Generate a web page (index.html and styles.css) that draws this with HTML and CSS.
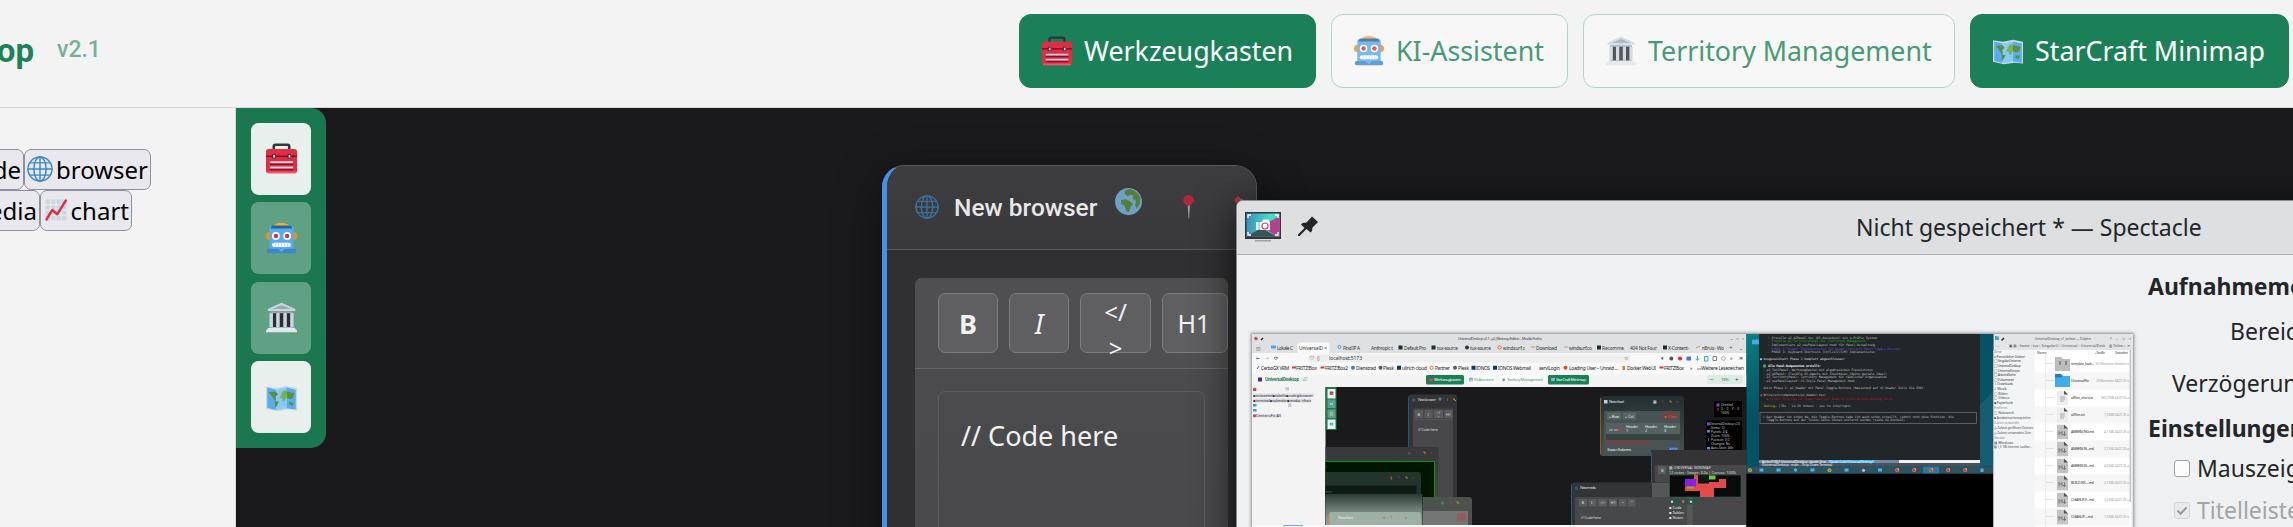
FILE: index.html
```html
<!DOCTYPE html>
<html lang="de">
<head>
<meta charset="utf-8">
<title>UniversalDesktop</title>
<link rel="stylesheet" href="styles.css">
</head>
<body>
<svg class="defs" width="0" height="0" aria-hidden="true">
  <defs>
    <linearGradient id="shot" x1="0" y1="0" x2="1" y2="0"><stop offset="0" stop-color="#3d8fc0"/><stop offset=".7" stop-color="#45dcc0"/></linearGradient>
    <linearGradient id="teal" x1="0" y1="0" x2="1" y2="1"><stop offset="0" stop-color="#0b8080"/><stop offset=".3" stop-color="#045064"/><stop offset="1" stop-color="#0a5468"/></linearGradient>
    <linearGradient id="pane" x1="0" y1="0" x2="0" y2="1"><stop offset="0" stop-color="#38383a"/><stop offset="1" stop-color="#4c4c4e"/></linearGradient>
    <linearGradient id="chartbg" x1="0" y1="0" x2="0" y2="1"><stop offset="0" stop-color="#24302f"/><stop offset="1" stop-color="#465352"/></linearGradient>
    <linearGradient id="fade" x1="0" y1="0" x2="0" y2="1"><stop offset="0" stop-color="#2b3a33"/><stop offset=".5" stop-color="#6d7f76"/><stop offset="1" stop-color="#93a39b"/></linearGradient>
    <symbol id="toolbox" viewBox="0 0 36 36">
      <path d="M9 8V4q0-2 2-2h14q2 0 2 2v4" fill="none" stroke="#31373d" stroke-width="3"/>
      <rect y="7" width="36" height="28" rx="3" fill="#dd2e44"/><rect y="14.500" width="36" height="1.800" fill="#a0041e"/>
      <rect x="1" y="33" width="34" height="2" rx="1" fill="#ea596e"/>
      <path d="M7 13h4v5H7zM25 13h4v5h-4z" fill="#31373d"/><path d="M8.300 14h2v3h-2zM26.300 14h2v3h-2z" fill="#ccd6dd"/>
      <path d="M4.500 23.500h27v2h-27zM4.500 29.500h27v2h-27z" fill="#a0041e"/><path d="M4.500 21.300h27v2.200h-27zM4.500 27.300h27v2.200h-27z" fill="#ccd6dd"/>
    </symbol>
    <symbol id="robot" viewBox="0 0 36 36">
      <ellipse cx="18" cy="4" rx="9" ry="4" fill="#ffac33"/><circle cx="4.500" cy="15" r="4.500" fill="#f4900c"/><circle cx="31.500" cy="15" r="4.500" fill="#f4900c"/>
      <rect x="4" y="4" width="28" height="27" rx="2" fill="#55acee"/><path d="M7 3h22l1.500 3.500h-25z" fill="#226699"/>
      <rect x="1" y="30" width="34" height="5" rx="2" fill="#3b88c3"/><path d="M14 30h8l-4 4z" fill="#55acee"/>
      <circle cx="11.500" cy="15" r="4.500" fill="#fff"/><circle cx="24.500" cy="15" r="4.500" fill="#fff"/><circle cx="11.500" cy="15" r="2.600" fill="#dd2e44"/><circle cx="24.500" cy="15" r="2.600" fill="#dd2e44"/>
      <rect x="7" y="23" width="22" height="5" rx="2.500" fill="#fff"/><path d="M11 23v5M14.500 23v5M18 23v5M21.500 23v5M25 23v5" stroke="#ccd6dd" stroke-width="1"/>
    </symbol>
    <symbol id="temple" viewBox="0 0 36 36">
      <path d="M5 11h26v22H5z" fill="#9aaab4"/><path d="M8 13h4v16H8zM16 13h4v16h-4zM24 13h4v16h-4z" fill="#292f33"/>
      <path d="M4 13h4v16H4zM12 13h3.500v16H12zM20.500 13H24v16h-3.500zM28.500 13H32v16h-3.500z" fill="#ccd6dd"/>
      <path d="M18 1L34 8v2.500H2V8z" fill="#ccd6dd"/><path d="M18 3.500L29 8H7z" fill="#9aaab4"/><path d="M3 30h30l3 3v2H0v-2z" fill="#e1e8ed"/>
    </symbol>
    <symbol id="map" viewBox="0 0 36 36">
      <path d="M0 5l12 2L24 4.500 36 7v26l-10-1-13 2L0 31z" fill="#ccd6dd"/>
      <path d="M1.500 6.500L11.500 9v23.500L1.500 30z" fill="#55acee"/><path d="M11.500 9L24 6.500V30.500l-12.500 2z" fill="#88c9f9"/><path d="M24 6.500L34.500 9v23L24 30.500z" fill="#55acee"/>
      <path d="M3 12l8-1 3 3-3 3 1 5-3-2-3-5zM10 22l5 1-2 4-2 3z" fill="#5c913b"/><path d="M16 19l3-8 5-2v8l-3 6-2-1v-3z" fill="#77b255"/><path d="M24 11l9 2-2 6-4 1-3-2zM27 23l5 1-1 4-4-2z" fill="#5c913b"/>
    </symbol>
    <symbol id="globe" viewBox="0 0 36 36">
      <g fill="none" stroke="currentColor" stroke-width="2"><circle cx="18" cy="18" r="16.700"/><ellipse cx="18" cy="18" rx="8.500" ry="16.700"/><path d="M18 1v34M1 18h34M4 9.500h28M4 26.500h28"/></g>
    </symbol>
    <symbol id="earth" viewBox="0 0 36 36">
      <circle cx="18" cy="18" r="18" fill="#6e9fc4"/>
      <path d="M13 4l7-3 8 4 6 7-1 9-4 7-2-5 1-6-5-3 2-4-5-1-3 2-4-3zM8 16l6-1 5 2 5 4-3 4-2 7-4-1-2-7-5-3z" fill="#547f38"/>
    </symbol>
    <symbol id="pin" viewBox="0 0 16 36"><path d="M6.500 14h4L9 34l-.600 2-.600-2z" fill="#8c98a0"/><circle cx="8" cy="8" r="8" fill="#b0293a"/></symbol>
    <symbol id="chart" viewBox="0 0 36 36">
      <path d="M1 1h34v34H1z" fill="#ccd6dd"/><path d="M9.500 1v34M18 1v34M26.500 1v34M1 9.500h34M1 18h34M1 26.500h34" stroke="#f0f2f4" stroke-width="1.500"/>
      <path d="M2.500 33.500L12 18l8 7L34 2.500" fill="none" stroke="#dd2e44" stroke-width="4" stroke-linecap="round" stroke-linejoin="round"/>
    </symbol>
    <symbol id="folder" viewBox="0 0 15 13"><path d="M0 0h6l2 2h7v11H0z" fill="#2980b0"/><path d="M0 3.500h6L8 2h7v11H0z" fill="#3daee9"/></symbol>
    <symbol id="md" viewBox="0 0 11 15"><path d="M0 0h7l4 4v11H0z" fill="#c3c3c3"/><path d="M7 0l4 4H7z" fill="#555"/><path d="M2 11V7l1.500 2L5 7v4M7.500 7v4M6 9.500L7.500 11 9 9.500" fill="none" stroke="#777" stroke-width="1"/></symbol>
    <symbol id="doc" viewBox="0 0 11 15"><path d="M0 0h7l4 4v11H0z" fill="#ededed"/><path d="M7 0l4 4H7z" fill="#555"/><path d="M3 6.500h5M3 8.500h5M3 10.500h4" stroke="#999" stroke-width=".8"/></symbol>
    <symbol id="fox" viewBox="0 0 4 4"><circle cx="2" cy="2" r="1.900" fill="#f0672a"/><circle cx="2" cy="2.100" r="1" fill="#7a3cc8"/><path d="M2 0l1.800 1.200L3 2z" fill="#ffc13c"/></symbol>
  </defs>
</svg>

<header class="topbar">
  <div class="brand"><span>UniversalDesktop</span></div>
  <span class="version">v2.1</span>
  <nav class="tabs">
    <button class="tab tab-on" style="width:297px"><svg><use href="#toolbox"/></svg><span>Werkzeugkasten</span></button>
    <button class="tab" style="width:237px"><svg><use href="#robot"/></svg><span>KI-Assistent</span></button>
    <button class="tab" style="width:372px"><svg><use href="#temple"/></svg><span>Territory Management</span></button>
    <button class="tab tab-on" style="width:319px"><svg><use href="#map"/></svg><span>StarCraft Minimap</span></button>
  </nav>
</header>

<main class="workspace">
  <aside class="tools">
    <div class="tool-row row-one"><button>code</button><button class="with-icon wide"><svg class="blue"><use href="#globe"/></svg>browser</button></div>
    <div class="tool-row row-two"><button>media</button><button class="with-icon narrow"><svg class="small"><use href="#chart"/></svg>chart</button></div>
  </aside>
  <section class="canvas">
    <div class="dock">
      <button class="on"><svg><use href="#toolbox"/></svg></button>
      <button><svg><use href="#robot"/></svg></button>
      <button><svg><use href="#temple"/></svg></button>
      <button class="on"><svg><use href="#map"/></svg></button>
    </div>

    <article class="editor">
      <header class="editor-head">
        <svg class="e-globe"><use href="#globe"/></svg><h2>New browser</h2>
        <svg class="e-earth"><use href="#earth"/></svg><svg class="e-pin"><use href="#pin"/></svg>
        <svg class="e-pencil" viewBox="0 0 24 24"><path d="M1 5l4-4 4 3-5 5z" fill="#b0394a"/><path d="M4 9l5-5 3 3-5 5z" fill="#8c98a0"/><path d="M7 12l5-5 10 10-1 5-5-1z" fill="#c89030"/></svg>
      </header>
      <div class="editor-body">
        <div class="editor-panel">
          <div class="format-bar">
            <button class="bold">B</button><button class="italic">I</button><button class="code">&lt;/<br>&gt;</button><button class="h1">H1</button>
          </div>
          <div class="code-area"><p>// Code here</p></div>
        </div>
      </div>
    </article>

    <article class="spectacle">
      <header class="spec-head">
        <svg class="spec-logo" viewBox="0 0 36 30"><path d="M0 0h36v27H0z" fill="#33373b"/><path d="M1.500 1.500h33v23h-33z" fill="url(#shot)"/><path d="M34.500 4v20.500H31L17 14z" fill="#b5418c"/><path d="M2 24l15-8 14 8.500H2z" fill="#3a5358"/><path d="M3 6V3h3M30 3h3v3M33 20v3h-3M6 23H3v-3" fill="none" stroke="#fff" stroke-width="1.300"/><path d="M11 10h2.500v8H11zM14.500 10H17l1-2.500h5.500l1 2.500h.5v8H14.500z" fill="#fff"/><circle cx="20" cy="14" r="3" fill="none" stroke="#c63d80" stroke-width="1.200"/><path d="M10 28h16v1.500H10z" fill="#9da3aa"/></svg>
        <svg class="spec-pin" viewBox="0 0 20 20"><path d="M14 .500L20 6l-5.500 5.500-.500 3.500-1.500 1.500L8.500 13 1.500 20H0v-1.500L6.500 12 3 8.500 4.500 7l4-.500z" fill="#232629"/></svg>
        <h1>Nicht gespeichert * — Spectacle</h1>
      </header>
      <div class="spec-body">
        <svg class="preview" viewBox="1252 334 881 193">
          <path d="M1252 334h881v193h-881z" fill="#000"/>
          <!-- browser window -->
          <path d="M1252 334h494.500v20H1252z" fill="#dfe0e2"/><path d="M1252 353h494.500v34H1252z" fill="#f8f8f9"/><path d="M1252 374.500h494.500v12.500H1252z" fill="#f3f3f3"/>
          <rect x="1297.500" y="342.500" width="32" height="11" rx="1.500" fill="#f8f8f9"/><rect x="1308" y="354.500" width="322" height="8" rx="2" fill="#eeeeef"/>
          <use href="#fox" x="1254" y="336.500" width="4" height="4"/><path d="M1260.500 339.500l2-2 1 1-2 2z" fill="#222"/>
          <g class="t" font-size="3.700" fill="#444"><text x="1458" y="339.800" textLength="84">UniversalDesktop v2.1 - µ2_Minimap Edition – Mozilla Firefox</text><text x="1730" y="340" textLength="14">⌄ ◇ ×</text></g>
          <g class="t" font-size="4.800" fill="#333">
            <text x="1256" y="349.500">◫</text><text x="1277" y="349.500" textLength="16">Lokale C</text><text x="1299" y="349.500" textLength="28">UniversalD ×</text><text x="1343" y="349.500" textLength="17">Find IP A</text><text x="1371" y="349.500" textLength="22">Anthropic t</text><text x="1404" y="349.500" textLength="22">Default Pro</text><text x="1437" y="349.500" textLength="21">tux-source</text><text x="1470" y="349.500" textLength="21">tux-source</text><text x="1503" y="349.500" textLength="22">windsurf.c</text><text x="1536" y="349.500" textLength="21">Download</text><text x="1569" y="349.500" textLength="23">windsurf.co</text><text x="1602" y="349.500" textLength="22">Recomme</text><text x="1630" y="349.500" textLength="27">404 Not Four</text><text x="1668" y="349.500" textLength="21">X-Content-</text><text x="1702" y="349.500" textLength="22">n8n.io - Wo</text><text x="1729.500" y="349.500">+</text><text x="1739" y="349.500">⌄</text>
          </g>
          <path d="M1271 345.500h5v3h-5z" fill="#3daee9"/><path d="M1398.500 345.500h4v4h-4zM1431.500 345.500h4v4h-4zM1597 345.500h4v4h-4zM1663 345.500h4v4h-4z" fill="#1c3028"/><circle cx="1339.500" cy="347" r="1.600" fill="none" stroke="#2a8ad0" stroke-width=".8"/><circle cx="1467" cy="347.500" r="2" fill="#333"/><circle cx="1499.500" cy="347.500" r="1.700" fill="none" stroke="#e86a30"/><path d="M1530.500 347h4.500M1564 347h4.500M1696 348l4-2" stroke="#d5a030"/>
          <g class="t" font-size="5" fill="#333"><text x="1256" y="360">←</text><text x="1265" y="360" fill="#aaa">→</text><text x="1274" y="360">⟳</text><text x="1310" y="360">⛉</text><text x="1317" y="360">▯</text><text x="1329" y="360" textLength="33">localhost:5173</text><text x="1624" y="360">☆</text><text x="1661" y="360">▾</text><text x="1730" y="360">»</text><text x="1739" y="360">≡</text></g>
          <circle cx="1671.300" cy="358.500" r="2" fill="#555"/><circle cx="1680" cy="358.500" r="2.100" fill="#e22850"/><path d="M1686.500 356.500h4.500v4h-4.500z" fill="#4b74e0"/><path d="M1697.500 356v4M1696 358.500l1.500 2 1.500-2" stroke="#3daee9" fill="none"/><path d="M1704.500 356.500h3.500v4.500h-3.500z" fill="none" stroke="#30b0a0"/><path d="M1713 356.500h3.500v4h-3.500z" fill="none" stroke="#555" stroke-width=".7"/><circle cx="1723.500" cy="358.500" r="1.900" fill="none" stroke="#999" stroke-width=".7"/>
          <g class="t" font-size="4.800" fill="#222">
            <text x="1261" y="369.500" textLength="28">CerboGX VRM</text><text x="1296" y="369.500" textLength="21">FRITZ!Box</text><text x="1325" y="369.500" textLength="23">FRITZ!Box2</text><text x="1356" y="369.500" textLength="20">Dienstrad</text><text x="1383" y="369.500" textLength="11">Plesk</text><text x="1402" y="369.500" textLength="25">ullrich cloud</text><text x="1435" y="369.500" textLength="15">Partner</text><text x="1458" y="369.500" textLength="11">Plesk</text><text x="1476" y="369.500" textLength="14">IONOS</text><text x="1498" y="369.500" textLength="33">IONOS Webmail</text><text x="1539" y="369.500" textLength="21">serviLogin</text><text x="1569" y="369.500" textLength="49">Loading User – Unraid ...</text><text x="1627" y="369.500" textLength="29">Docker WebUI</text><text x="1664" y="369.500" textLength="20">FRITZ!Box</text><text x="1690" y="369.500">»</text><text x="1697" y="369.500" textLength="47">▭Weitere Lesezeichen</text>
          </g>
          <path d="M1292 366.500h4v2h-4zM1320.500 366.500h4v2h-4zM1659.500 366.500h4v2h-4z" fill="#e03818"/><circle cx="1353" cy="367.800" r="2" fill="#2d86d8"/><circle cx="1380.500" cy="367.800" r="2" fill="#4a6070"/><path d="M1397 365.800h4v4h-4zM1471.500 365.800h4v4h-4zM1493 365.800h4v4h-4z" fill="#12366e"/><circle cx="1431.500" cy="367.800" r="1.700" fill="none" stroke="#e87830"/><circle cx="1455" cy="367.800" r="2" fill="#4a6070"/><circle cx="1565.500" cy="367.800" r="2" fill="#e05018"/><path d="M1622.500 366h2.500v4h-2.500z" fill="#e08030"/><path d="M1257 369l2-3" stroke="#2a7ad0"/>
          <path d="M1258 377.500h4v4h-4z" fill="#4a2a80"/>
          <g class="t" font-size="4.500" fill="#1a7f56"><text x="1265" y="381" textLength="34" font-weight="bold">UniversalDesktop</text><text x="1302" y="380.800" textLength="6" opacity=".5">v2.1</text></g>
          <rect x="1426" y="375" width="38" height="9.500" rx="1.500" fill="#1a7f56"/><rect x="1467" y="375" width="29.500" height="9.500" rx="1.500" fill="#fafafa"/><rect x="1499" y="375" width="47" height="9.500" rx="1.500" fill="#fafafa"/><rect x="1548" y="375" width="41" height="9.500" rx="1.500" fill="#1a7f56"/><rect x="1707" y="375" width="36" height="9" rx="1.500" fill="#dcebe3"/>
          <use href="#toolbox" x="1429" y="377.500" width="4" height="4"/><use href="#robot" x="1469" y="377.500" width="4" height="4"/><use href="#temple" x="1502" y="378" width="3.500" height="3.500"/><use href="#map" x="1551" y="377.500" width="4" height="4"/>
          <g class="t" font-size="4.200"><text x="1434" y="381.200" textLength="27" fill="#fff">Werkzeugkasten</text><text x="1474" y="381.200" textLength="20" fill="#50a080">KI-Assistent</text><text x="1507" y="381.200" textLength="36" fill="#50a080">Territory Management</text><text x="1556" y="381.200" textLength="30" fill="#fff">StarCraft Minimap</text><text x="1710" y="381.500" font-size="6" fill="#333">−</text><text x="1721" y="381.200" textLength="8" fill="#3a9570">100%</text><text x="1735" y="381.500" font-size="6" fill="#333">+</text></g>
          <path d="M1252 387h494.500v138H1252z" fill="#1a1a1c"/><path d="M1252 387h73.500v138H1252z" fill="#f3f3f3"/>
          <path d="M1253 393.500h61v3.500h-61zM1253 398.500h58v4h-58zM1253 414h28v3.500h-28z" fill="#dedee4"/>
          <use href="#toolbox" x="1253" y="387.500" width="3.500" height="3.500"/><path d="M1285.500 387h3.500v3.500h-3.500zM1288 403.500h3.500v3.500h-3.500z" fill="#c3cbd3"/><path d="M1253 404h3.500v2.500h-3.500zM1253 409h3.500v2.500h-3.500z" fill="#30a0a8"/><circle cx="1254.500" cy="415.700" r="1.500" fill="#dd2e44"/>
          <g class="t" font-size="3.500" fill="#222"><text x="1253" y="396.500" textLength="60" lengthAdjust="spacingAndGlyphs">▪notizzettel▪tabelle▪code◍browser</text><text x="1253" y="401.800" textLength="58" lengthAdjust="spacingAndGlyphs">▪terminal▪calendar▪media⟋chart</text><text x="1256" y="417" textLength="25">Center▫Fit All</text></g>
          <path d="M1325.500 387h11v43h-11z" fill="#1a7850"/><path d="M1327.500 389h8v9.500h-8zM1327.500 419.500h8v9.500h-8z" fill="#eaf2ee"/><path d="M1327.500 399.500h8v8.500h-8zM1327.500 409.500h8v8.500h-8z" fill="#60a085"/>
          <use href="#toolbox" x="1329.500" y="391" width="4" height="4"/><use href="#robot" x="1329.500" y="401.500" width="4" height="4"/><use href="#temple" x="1329.500" y="411.500" width="4" height="4"/><use href="#map" x="1329.500" y="422" width="4" height="4"/>
          <!-- narrow editor -->
          <rect x="1408" y="394.500" width="49" height="130" rx="3" fill="#343436"/><path d="M1408.500 397v55" stroke="#25597c" stroke-width="1"/><rect x="1413" y="408.500" width="40" height="116" fill="#48484a"/><path d="M1413 419.500h40" stroke="#666" stroke-width=".4"/>
          <path d="M1415 410h8v8h-8zM1424.500 410h8v8h-8zM1434 410h9v8h-9zM1444.500 410h8v8h-8z" fill="#5a5a5c"/>
          <g class="t" font-size="3.800" fill="#ddd"><text x="1412" y="400.800" fill="#3b88c3">◍</text><text x="1418" y="400.800" textLength="18">New browser</text><text x="1417.500" y="415.500">B</text><text x="1427.500" y="415.500">I</text><text x="1436.500" y="413.500">&lt;/</text><text x="1437.500" y="417.500">&gt;</text><text x="1446" y="415.500">H1</text><text x="1418" y="430.500" textLength="20">// Code here</text></g>
          <circle cx="1440" cy="399" r="1.700" fill="#4f8080"/><path d="M1447.500 398v3" stroke="#b0293a"/><path d="M1453 398.500l3 2.500" stroke="#e0a030"/>
          <!-- stacked windows -->
          <path d="M1325.500 447h110q3 0 3 3v75h-113z" fill="url(#pane)"/><path d="M1325.500 461.500h109V525h-109z" fill="#001600"/><path d="M1325.500 461.500h109V507" fill="none" stroke="#109010" stroke-width="1"/>
          <path d="M1325.500 472h92.500q3 0 3 3v50h-95.500z" fill="#22342b"/><rect x="1325.500" y="485.500" width="91" height="12" fill="#0e1a14"/><path d="M1325.500 494h97v31h-97z" fill="url(#fade)"/>
          <path d="M1423 497h46q3 0 3 3v25h-49z" fill="#4e524f"/><path d="M1423 511h45v14h-45z" fill="#737674"/><rect x="1457" y="513" width="9" height="8" rx="1" fill="#955c60"/>
          <rect x="1329" y="512" width="92" height="14" rx="2" fill="#9cb0a6"/><path d="M1329 514v11" stroke="#e08040"/>
          <g class="t" font-size="3.800"><text x="1338" y="518.800" textLength="15" fill="#eee">New chart</text><g fill="#d04040"><text x="1383" y="518.800">▫</text><text x="1391" y="518.800">!</text><text x="1398" y="518.800" fill="#e0a030">✎</text><text x="1405" y="518.800">×</text><text x="1390" y="478.500">▮</text><text x="1398" y="478.500">!</text><text x="1405" y="478.500" fill="#e0a030">✎</text><text x="1412" y="478.500">×</text><text x="1408" y="453.500" fill="#e0a030">+</text><text x="1416" y="453.500">!</text><text x="1423" y="453.500" fill="#e0a030">✎</text><text x="1430" y="453.500">×</text><text x="1441" y="503.500" fill="#60a090">◍</text><text x="1450" y="503.500">!</text><text x="1456" y="503.500" fill="#e0a030">✎</text><text x="1464" y="503.500">×</text></g><text x="1326" y="467.500" fill="#20c020">›</text><text x="1326" y="492.500" fill="#20a040">ers</text></g>
          <!-- chart window -->
          <rect x="1600" y="396" width="84" height="60" rx="3" fill="url(#chartbg)"/><path d="M1600.500 398v56" stroke="#9a5028" stroke-width="1"/><rect x="1604" y="411" width="76" height="42" fill="#485453"/>
          <rect x="1607" y="412.500" width="14" height="7" fill="#596563"/><rect x="1623" y="412.500" width="13" height="7" fill="#596563"/><rect x="1662" y="412.500" width="16" height="6.500" fill="#704347"/><path d="M1606 423h74v11h-74z" fill="#536160"/><path d="M1606 434h74v6h-74z" fill="#37433f"/><path d="M1606 440h45v5h-45z" fill="#63484a"/><rect x="1669" y="447" width="9" height="4" fill="#2b66a8"/>
          <g class="t" font-size="3.800" fill="#eee"><text x="1609" y="402.800" textLength="15">New chart</text><text x="1609" y="417.500" textLength="10">+ Row</text><text x="1625" y="417.500">+ Col</text><text x="1664" y="417.500" textLength="13" fill="#e05050">▪ Clear</text><text x="1626" y="428" textLength="12">Header</text><text x="1626" y="432">1</text><text x="1645" y="428" textLength="12">Header</text><text x="1645" y="432">2</text><text x="1664" y="428" textLength="12">Header</text><text x="1664" y="432">3</text><text x="1607" y="450.500" textLength="24">3 rows × 3 columns</text><text x="1669.500" y="450.500" textLength="8" fill="#9cf">EDIT</text><text x="1653" y="402.800">▦</text><text x="1662" y="402.800" fill="#e04040">!</text><text x="1669" y="402.800" fill="#e0a030">✎</text><text x="1676" y="402.800" fill="#e04040">×</text></g><path d="M1604 400h3.500v3.500h-3.500z" fill="#b8d0e0"/><path d="M1609 430h4M1614 430h4" stroke="#ddd" stroke-width=".7"/><path d="M1618 428.500h3v3h-3z" fill="#a04448"/>
          <path d="M1714 401h28v16h-28zM1706 420.500h36v30h-36z" fill="#000"/>
          <g class="t" font-size="3.200" fill="#ccc"><text x="1721" y="406">Untitled</text><text x="1721" y="410" textLength="18">X: 0, Y: 0</text><text x="1721" y="414.200">100%</text><text x="1710" y="425" textLength="30" lengthAdjust="spacingAndGlyphs">UniversalDesktop v2.0</text><text x="1711" y="429">Items: 12</text><text x="1711" y="433">Panels: 2/4</text><text x="1711" y="437">Zoom: 100%</text><text x="1711" y="441">Position: 0,0</text><text x="1711" y="445">Changes: No</text><text x="1711" y="449">Auto-Save: Idle</text></g>
          <path d="M1716.500 403.500h3v3h-3zM1707 422.500h3v3h-3z" fill="#8040d0"/><path d="M1707 447h3v2.500h-3zM1707 430h3v2.500h-3z" fill="#4a90c0"/><path d="M1718 408v3M1708.500 438v3" stroke="#c03040"/>
          <!-- lower editors and minimap -->
          <path d="M1651 450h95.500v75H1651z" fill="#343436"/><path d="M1651.500 453v72" stroke="#25607f"/><path d="M1655 465h91.500v60H1655z" fill="#48484a"/><path d="M1658 466h8v8h-8z" fill="#5c5c5e"/>
          <rect x="1571" y="482.500" width="122" height="43" rx="3" fill="#333435"/><path d="M1652 483h41v42h-41z" fill="#555757"/><path d="M1571.500 485v40" stroke="#25607f"/><path d="M1575 497h112v28h-112z" fill="#474849"/><path d="M1579 499h8v7.500h-8zM1588.500 499h8v7.500h-8zM1598 499h9v7.500h-9zM1609 499h8v7.500h-8zM1619 499h7.500v7.500h-7.500zM1628 499h7.500v7.500h-7.500z" fill="#5a5b5c"/>
          <g class="t" font-size="4" fill="#ddd"><text x="1580" y="489" textLength="16">New media</text><text x="1581.500" y="504">B</text><text x="1591" y="504">I</text><text x="1599.500" y="504" textLength="6">&lt;/&gt;</text><text x="1610.500" y="504">H1</text><text x="1622" y="504">•</text><text x="1631" y="504">"</text><text x="1581" y="518.500" textLength="20">// Code here</text><text x="1661" y="472">B</text><text x="1669" y="468.500" textLength="42" lengthAdjust="spacingAndGlyphs">▦ UNIVERSAL MINIMAP</text><text x="1669" y="473.500" textLength="67" lengthAdjust="spacingAndGlyphs">12 notes · Image: 3.0x | Canvas: 100%</text></g><path d="M1575 486.500h3v3h-3z" fill="#235a85"/>
          <rect x="1669.500" y="475" width="71.500" height="22" fill="#0a0a0a" stroke="#23604a" stroke-width=".7"/><path d="M1694 475h4v3h11v4h10v-3h7v9h-12v9h-14v-6h-15v-8h9z" fill="#e24b4b"/><rect x="1685" y="479" width="11" height="7.500" fill="#8a20e8"/><rect x="1709" y="475.500" width="6.500" height="4" fill="#7ac820"/><path d="M1687 486.500h7v2h-7z" fill="#90b020"/><path d="M1698 475.500h11v8h-11z" fill="#101815"/>
          <path d="M1669.500 499h28v5.500h-28z" fill="#2f5045"/><circle cx="1672" cy="501.700" r="1.200" fill="#b0d8f0"/><path d="M1682 500h2.500v3h-2.500z" fill="#e04860"/><circle cx="1691" cy="501.700" r="1.200" fill="#b0d8f0"/>
          <g class="t" font-size="3.800" fill="#eee"><text x="1669" y="509">▪ Code</text><text x="1669" y="514">▪ Tables</text><text x="1669" y="519">▪ Notes</text></g>
          <path d="M1252 525h494.500v2H1252z" fill="#f8f8f8"/><path d="M1283 525h20v1h-20z" fill="#77a9ef"/>
          <!-- terminal desktop -->
          <path d="M1746.500 334h247v140h-247z" fill="url(#teal)"/><path d="M1980 405l13-14v75h-13z" fill="#155d70"/><path d="M1759 334h221v126h-221z" fill="#232629"/><use href="#folder" x="1752" y="338.500" width="7" height="6"/>
          <g class="m" font-size="3.200" fill="#bbb">
            <text x="1768" y="338.500" textLength="109">☐ Erstelle µ2_AIPanel.tsx (KI-Assistent) mit µ-Präfix System</text><text x="1768" y="342.200" textLength="99" fill="#18b818">☐ Erstelle µ2_TerritoryPanel.tsx (Territory-Management)</text><text x="1768" y="346" textLength="107">☐ Implementiere µ2_usePanelLayout Hook für Panel-Verwaltung</text><text x="1768" y="349.500" textLength="132" fill="#5050d8">☐ PHASE 2: Header implementieren (µ1_Header.tsx) mit Panel-Toggle-Buttons</text><text x="1768" y="353" textLength="107">☐ PHASE 3: Keyboard Shortcuts (Ctrl+1/2/3/M) implementieren</text>
            <text x="1760" y="360.300" textLength="85" fill="#ddd">● Ausgezeichnet! Phase 1 komplett abgeschlossen!</text><text x="1768" y="367.300" textLength="53" fill="#eee" font-weight="bold">Alle Panel-Komponenten erstellt:</text><text x="1763" y="371" textLength="110">- µ2_ToolPanel: Werkzeugkasten mit algebraischen Transistoren</text><text x="1763" y="374.500" textLength="124">- µ2_AIPanel: Flexible AI-Agents mit Checkboxen (deine geniale Idee!)</text><text x="1763" y="378" textLength="124">- µ2_TerritoryPanel: Territory Management mit räumlicher Organisation</text><text x="1763" y="381.700" textLength="92">- µ2_usePanelLayout: V1-Style Panel-Management Hook</text><text x="1763" y="389" textLength="162">Jetzt Phase 2: µ1_Header mit Panel-Toggle-Buttons (basierend auf V1 Header Zeile 314-350):</text>
            <text x="1760" y="396" textLength="66"><tspan fill="#e03030">●</tspan> Write(src/components/µ1_Header.tsx)</text><text x="1765" y="399.600" textLength="129" fill="#c01818">⎿ Error: File has not been read yet. Read it first before writing to it.</text><text x="1760" y="406.800" textLength="91"><tspan fill="#b8a820">· Baking…</tspan> (78s · 14.3k tokens · esc to interrupt)</text><text x="1763" y="417.500" textLength="191">&gt; Der Header ist schon da, die Toggle-Buttons habe ich auch schon erstellt, jedoch noch ohne Funktion. Die</text><text x="1767" y="421" textLength="138">Toggle-Buttons auf der linken Seite können entfernt werden (siehe KI-Kontext)</text>
          </g>
          <rect x="1760" y="412.500" width="216.500" height="11" fill="none" stroke="#777" stroke-width=".7"/><rect x="1763" y="364.500" width="3" height="3" fill="#30b040"/>
          <path d="M1759 460h221v3h-221z" fill="#eff0f1"/><path d="M1759 460h140v3h-140z" fill="#6f8c9b"/><path d="M1828 460h47v3h-47z" fill="#3daee9"/><path d="M1759 463h221v3.500h-221z" fill="#49525a"/><g class="t" font-size="3.200" fill="#fff"><text x="1762" y="462.600" textLength="64">ArchivTUI01 UniversalDesktop claude-flow</text><text x="1829" y="462.600" textLength="44">Claude Code (UniversalDesktop)</text><text x="1762" y="465.900" textLength="70">(UniversalDesktop : node – Drop-Down Terminal</text></g>
          <path d="M1746.500 466.700h247v7h-247z" fill="#2d5360"/><path d="M1923 466.700h16v7h-16z" fill="#267ba0"/>
          <g fill="#4fb2e8"><path d="M1759.500 468.500h4v3h-4zM1776.500 468.500h4v3h-4zM1810.500 468.500h4v3h-4zM1844.500 468.500h4v3h-4zM1878 468.500h4v3h-4zM1980.500 468.500h3v3.500h-3z"/><circle cx="1795.500" cy="470" r="1.700"/></g><circle cx="1750" cy="470.300" r="2" fill="#d8a030"/><circle cx="1829.500" cy="470.300" r="2" fill="#d8a030"/><circle cx="1750" cy="470.300" r=".9" fill="#3070e0"/><circle cx="1829.500" cy="470.300" r=".9" fill="#3070e0"/><circle cx="1863.500" cy="470.300" r="1.600" fill="#e8a0c8"/>
          <use href="#fox" x="1895" y="468" width="4.500" height="4.500"/><use href="#fox" x="1912" y="468" width="4.500" height="4.500"/><use href="#fox" x="1929" y="468" width="4.500" height="4.500"/><use href="#fox" x="1946" y="468" width="4.500" height="4.500"/><use href="#fox" x="1963" y="468" width="4.500" height="4.500"/>
          <path d="M1746.500 473.700h247V527h-247z" fill="#000"/>
          <!-- file manager -->
          <path d="M1993.500 334h139.500v193h-139.500z" fill="#e3e4e6"/><path d="M1993.500 350h41v177h-41z" fill="#f3f4f5"/><path d="M2034.500 350h97v177h-97z" fill="#fff"/><path d="M2034.500 372.500h95v17h-95zM2034.500 406.500h95v17h-95zM2034.500 440.500h95v17h-95zM2034.500 474.500h95v17h-95zM2034.500 508.500h95v17h-95z" fill="#f6f6f6"/><path d="M2130.200 350v152" stroke="#aaa"/><path d="M2045.500 356v171" stroke="#e5e5e5" stroke-width=".6"/>
          <path d="M2046 363.500h8M2046 380.500h8M2046 397.500h8M2046 414.500h8M2046 431.500h8M2046 448.500h8M2046 465.500h8M2046 482.500h8M2046 499.500h8M2046 516.500h8" stroke="#ccc" stroke-width=".5"/>
          <use href="#folder" x="1995" y="336" width="4" height="4"/><path d="M2001 340l2.500-2.500 1 1-2.500 2.500z" fill="#222"/>
          <g class="t" font-size="3.400" fill="#444"><text x="2035" y="339.800" textLength="56" lengthAdjust="spacingAndGlyphs">UniversalDesktop_v1_archive — Dolphin</text><text x="2110" y="340" textLength="21">? ⌄ ◇ ×</text><text x="1995" y="347">‹ –</text><text x="2009" y="347" textLength="96">▣ ▤ › home › tux › SingularU › Universal › UniversalDesk</text><text x="2109" y="347" textLength="21">▥ Teilen ⌕ ≡</text><text x="2037" y="353.800">Name</text><text x="2094" y="353.800" textLength="11">⌄Größe</text><text x="2115" y="353.800" textLength="13">Geändert</text></g>
          <g class="t" font-size="3.500" fill="#444"><text x="1994" y="353" fill="#777">Orte</text><text x="1994" y="357.700" textLength="31">⌂ Persönlicher Ordner</text><text x="1994" y="362.200" textLength="27">□ SingularUniverse</text><text x="1994" y="366.900" textLength="27">□ UniversalDesktop</text><text x="1994" y="371.500" textLength="26">□ UniversalScripts</text><text x="1994" y="376" textLength="22">□ Arbeitsfläche</text><text x="1994" y="380.700" textLength="20">□ Dokumente</text><text x="1994" y="385.300" textLength="19">⇩ Downloads</text><text x="1994" y="389.900">♪ Musik</text><text x="1994" y="394.500">□ Bilder</text><text x="1994" y="399">□ Videos</text><text x="1994" y="403.700" textLength="19">▪ Papierkorb</text><text x="1994" y="409.300" fill="#888">Entfernt</text><text x="1994" y="414">□ Netzwerk</text><text x="1994" y="418.600" textLength="37" lengthAdjust="spacingAndGlyphs">▪ Arndwittux/netzspeicher</text><text x="1994" y="424.200" textLength="25" lengthAdjust="spacingAndGlyphs" fill="#888">Zuletzt verwendet</text><text x="1994" y="428.900" textLength="39" lengthAdjust="spacingAndGlyphs">◷ Zuletzt geöffnete Dateien</text><text x="1994" y="433.500" textLength="37" lengthAdjust="spacingAndGlyphs">◷ Zuletzt verwendete Orte</text><text x="1994" y="439" fill="#888">Geräte</text><text x="1994" y="443.700">▤ Windows</text><text x="1994" y="448.300" textLength="38" lengthAdjust="spacingAndGlyphs">▤ 1,5 TiB Internes Laufwe...</text></g>
          <path d="M2055 357h6l2 2h7v12h-15z" fill="#bcbcbc"/><path d="M2059 361h2v4h-2zM2065 361h2v4h-2z" fill="#888"/><use href="#folder" x="2055" y="374" width="15" height="13"/>
          <use href="#doc" x="2057" y="390.500" width="11" height="15"/><use href="#doc" x="2057" y="407.500" width="11" height="15"/><use href="#md" x="2057" y="424.500" width="11" height="15"/><use href="#md" x="2057" y="441.500" width="11" height="15"/><use href="#md" x="2057" y="458.500" width="11" height="15"/><use href="#md" x="2057" y="475.500" width="11" height="15"/><use href="#md" x="2057" y="492.500" width="11" height="15"/><use href="#md" x="2057" y="509.500" width="11" height="15"/>
          <g class="t" font-size="3.500" fill="#333"><text x="2071" y="365" textLength="23">template_back...</text><text x="2071" y="382" textLength="18">UniversalFile</text><text x="2071" y="399" textLength="22">allfiles_short.txt</text><text x="2071" y="416" textLength="14">allfiles.txt</text><text x="2071" y="433" textLength="23">ANWEISUNG.md</text><text x="2071" y="450" textLength="23">ANWEISUN....md</text><text x="2071" y="467" textLength="23">ANWEISUN....md</text><text x="2071" y="484" textLength="23">BUILD-FIX-....md</text><text x="2071" y="501" textLength="23">CLEANUP-F....md</text><text x="2071" y="518" textLength="22">CLEANUP-....md</text></g>
          <g class="t" font-size="3.300" fill="#999"><text x="2096" y="365" textLength="33">62 Elemente Gestern u</text><text x="2096" y="382" textLength="33">23 Elemente 24.07.25 u</text><text x="2101" y="399" textLength="28">360,3 KiB 24.07.25 u</text><text x="2104" y="416" textLength="25">1,0 MiB 24.07.25 u</text><text x="2104" y="433" textLength="25">4,1 KiB 24.07.25 u</text><text x="2104" y="450" textLength="25">3,3 KiB 24.07.25 u</text><text x="2104" y="467" textLength="25">4,9 KiB 24.07.25 u</text><text x="2104" y="484" textLength="25">2,2 KiB 24.07.25 u</text><text x="2104" y="501" textLength="25">3,0 KiB 24.07.25 u</text><text x="2104" y="518" textLength="25">1,9 KiB 24.07.25 u</text></g>
        </svg>
        <form class="options">
          <h3>Aufnahmemodus</h3>
          <p class="area">Bereich:</p>
          <p class="delay">Verzögerung:</p>
          <h3 class="settings">Einstellungen</h3>
          <div class="check"><i class="box"></i><span>Mauszeiger</span></div>
          <div class="check disabled"><i class="box"><svg viewBox="0 0 14 14"><path d="M2.500 7l3.200 3.200L11.500 4" fill="none" stroke="#999" stroke-width="2"/></svg></i><span>Titelleiste</span></div>
        </form>
      </div>
    </article>
  </section>
</main>
</body>
</html>
```
FILE: styles.css
```css
* { box-sizing: border-box; }
html, body { height: 100%; }
body { margin: 0; overflow: hidden; display: flex; flex-direction: column; background: #f3f3f3; font-family: "Noto Sans", sans-serif; color: #232629; }
button { font: inherit; padding: 0; white-space: nowrap; }
h1, h2, h3, p { margin: 0; }
.defs { position: absolute; }

.topbar { flex: none; height: 108px; display: flex; border-bottom: 1px solid #d6d6d6; }
.brand { width: 34px; display: flex; justify-content: flex-end; overflow: hidden; padding-top: 31px; font: 700 33px/40px Roboto, sans-serif; color: #1d8259; }
.version { width: 985px; padding: 36px 0 0 23px; font: 500 23px/28px Roboto, sans-serif; color: #76b197; }
.tabs { display: flex; gap: 15px; padding-top: 14px; }
.tab { flex: none; height: 74px; display: flex; align-items: center; gap: 12px; padding: 0 0 0 22px; border: 1px solid #b1d5c6; border-radius: 12px; background: #f7f7f7; color: #489a78; font-size: 26.800px; }
.tab span { padding-bottom: 2px; }
.tab svg { flex: none; width: 30px; height: 30px; }
.tab:not(.tab-on) svg { opacity: .8; }
.tab-on { border-color: #1b8057; background: #1b8057; color: #fff; }

.workspace { flex: 1; min-height: 0; display: flex; }
.tools { width: 236px; flex: none; border-right: 1px solid #dadada; padding-top: 41px; overflow: hidden; }
.tool-row { display: flex; justify-content: flex-end; height: 41px; }
.row-one { width: 151px; }
.row-two { width: 132px; }
.tool-row button { flex: none; display: flex; align-items: center; height: 41px; padding: 0 2px 1px; border: 1px solid #8f8f9d; border-radius: 7px; background: #e9e9ed; color: #000; font-size: 24px; }
.tool-row .wide { width: 127px; justify-content: space-between; }
.tool-row .narrow { width: 92px; justify-content: space-between; }
.tool-row svg { width: 26px; height: 26px; }
.tool-row .small { width: 22px; height: 22px; margin: 0 2px; }
.blue { color: #3b88c3; }

.canvas { flex: 1; position: relative; overflow: hidden; background: #1a1a1c; }
.dock { width: 90px; height: 340px; padding: 15px; display: flex; flex-direction: column; gap: 7.500px; background: #1a7750; border-radius: 0 15px 15px 0; }
.dock button { height: 72px; border: 0; border-radius: 7.500px; background: #60a085; display: flex; align-items: center; justify-content: center; }
.dock .on { background: #e8f0ed; }
.dock svg { width: 31px; height: 31px; }

.editor { position: absolute; left: 646px; top: 57px; width: 375px; height: 500px; border: 1px solid #59595b; border-left: 5px solid #4a90e2; border-radius: 22px; background: #303032; overflow: hidden; box-shadow: 0 12px 48px rgba(0, 0, 0, .4); }
.editor-head { height: 84px; display: flex; background: linear-gradient(#3d3d3f, #39393b); border-bottom: 1px solid #59595b; padding-left: 28px; }
.editor-head svg { flex: none; }
.e-globe { width: 24px; height: 24px; margin-top: 29px; color: #3b709b; }
.editor-head h2 { width: 142px; margin: 27px 0 0 15px; font: 500 24.500px/30px Roboto, sans-serif; color: #e8e8e8; white-space: nowrap; }
.e-earth { width: 27px; height: 27px; margin: 22px 0 0 19px; }
.e-pin { width: 11px; height: 24px; margin: 29px 0 0 41px; }
.e-pencil { width: 24px; height: 24px; margin: 29px 0 0 39px; }
.editor-body { padding: 28px 28px 0; }
.editor-panel { height: 420px; background: linear-gradient(#4c4c4e, #48484a); border-radius: 7px; overflow: hidden; }
.format-bar { height: 91px; padding: 15px 0 0 23px; display: flex; gap: 11px; background: #4f4f51; border-bottom: 1px solid #656567; }
.format-bar button { flex: none; width: 60px; height: 60px; border: 1px solid #7c7c7e; border-radius: 7px; background: #5f5f61; color: #f2f2f2; font-size: 24px; }
.format-bar .bold { font-weight: 700; font-size: 27px; }
.format-bar .italic { font-style: italic; font-size: 27px; }
.format-bar .code { width: 71px; line-height: 36px; padding-bottom: 2px; }
.format-bar .h1 { width: 66px; padding-right: 2px; font-size: 25px; }
.code-area { margin: 22px 23px 0; height: 300px; border: 1px solid #5e5e60; border-radius: 7px; padding: 22px 22px; color: #f2f2f2; font-size: 27px; line-height: 43px; }

.spectacle { position: absolute; left: 1000px; top: 92px; width: 1100px; height: 460px; border: 1px solid #8b8c8e; border-radius: 7px 7px 0 0; background: #eff0f2; overflow: hidden; box-shadow: 0 8px 40px rgba(0, 0, 0, .7); }
.spec-head { height: 54px; display: flex; background: #dedfe1; border-bottom: 1px solid #afb0b2; padding-left: 8px; }
.spec-head svg { flex: none; }
.spec-logo { width: 36px; height: 30px; margin-top: 11px; }
.spec-pin { width: 20px; height: 20px; margin: 15px 0 0 17px; }
.spec-head h1 { margin: 10px 0 0 538px; font-weight: 400; font-size: 23px; line-height: 32px; white-space: nowrap; }
.spec-body { display: flex; }
.preview { flex: none; width: 881px; height: 193px; margin: 79px 0 0 15px; box-shadow: 0 0 3px 1px #888; }
.t { font-family: "Noto Sans", "DejaVu Sans", sans-serif; }
.m { font-family: "DejaVu Sans Mono", monospace; }
.options { flex: none; width: 260px; padding: 14px 0 0 15px; font-size: 23px; line-height: 34px; white-space: nowrap; }
.options h3 { font-size: 23px; font-weight: 700; line-height: 34px; }
.area { margin: 11px 0 0 82px; }
.delay { margin: 18px 0 0 24px; }
.options .settings { margin-top: 11px; }
.check { display: flex; align-items: center; gap: 7px; margin: 6px 0 0 26px; }
.check.disabled { margin-top: 8px; color: #a4a5a7; }
.box { flex: none; width: 16px; height: 17px; border: 1px solid #a0a1a3; border-radius: 3px; background: #fcfcfc; display: flex; }
.disabled .box { background: #e9eaec; border-color: #d5d6d8; }
```
